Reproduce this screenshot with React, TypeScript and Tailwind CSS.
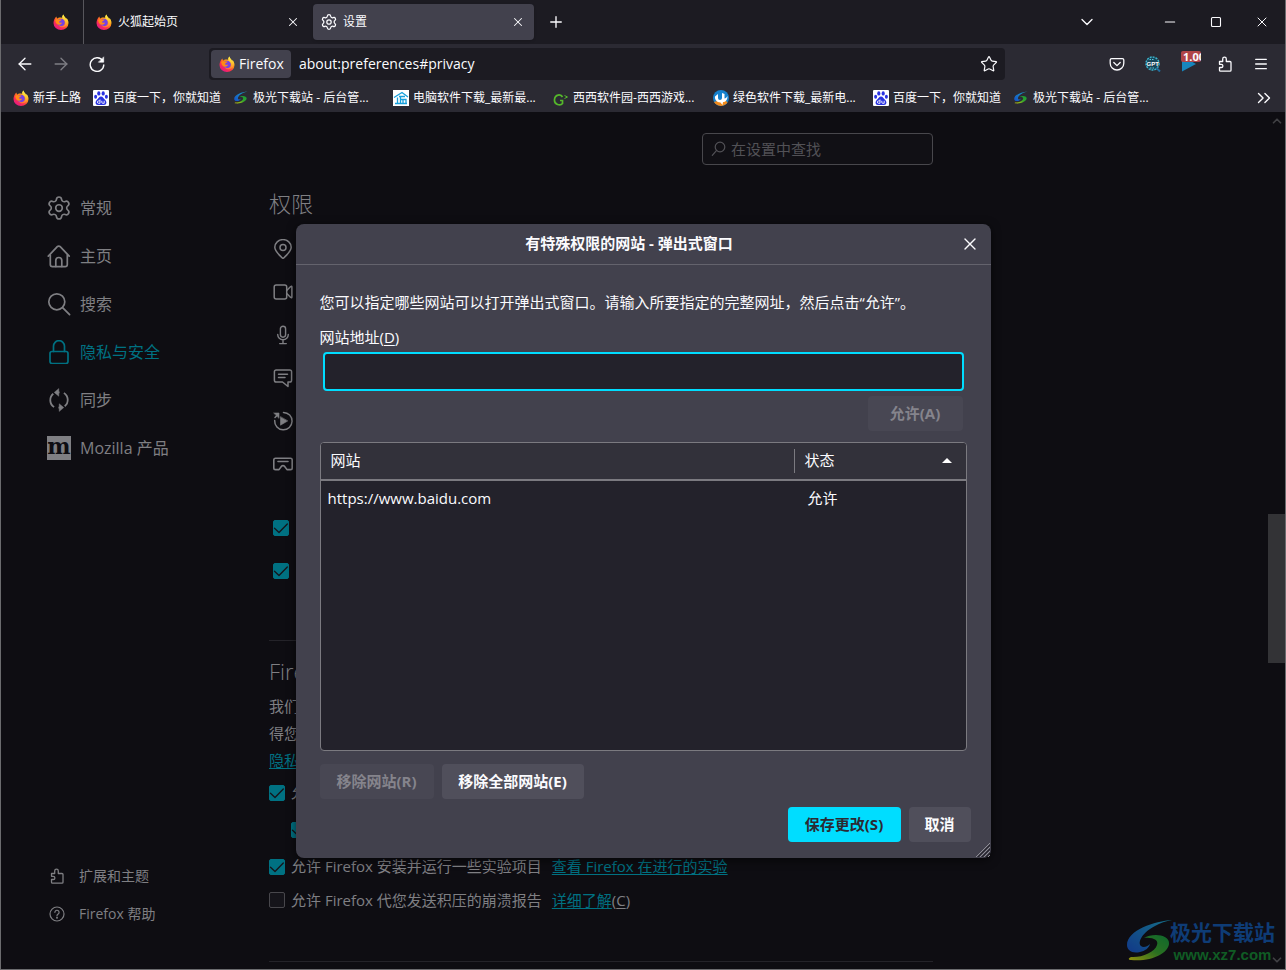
import { useState } from "react";
import {
  ArrowLeft,
  ArrowRight,
  ChevronDown,
  ChevronUp,
  ChevronsRight,
  Menu,
  Minus,
  Plus,
  Settings,
  Square,
  Star,
  X,
} from "lucide-react";
import clsx from "clsx";

type IconProps = { className?: string };

function FirefoxLogo({ className = "size-4 shrink-0" }: IconProps) {
  return (
    <svg viewBox="0 0 32 32" className={className} aria-hidden="true">
      <defs>
        <linearGradient id="fx-body" x1="0.85" y1="0.1" x2="0.2" y2="0.95">
          <stop offset="0" stopColor="#fff44f" />
          <stop offset="0.35" stopColor="#ff980e" />
          <stop offset="0.65" stopColor="#ff3647" />
          <stop offset="1" stopColor="#e31587" />
        </linearGradient>
        <linearGradient id="fx-flame" x1="0.7" y1="0" x2="0.6" y2="1">
          <stop offset="0" stopColor="#fff44f" />
          <stop offset="0.5" stopColor="#ffc62e" />
          <stop offset="1" stopColor="#ff7139" />
        </linearGradient>
      </defs>
      <path
        d="M21 1c-3 3-3 5-2 7-6-2-9 0-10 1-2-1-2-3-2-4-4 3-6 8-6 13a15 14 0 0 0 30 0c0-4-2-8-4-10 0 1 0 2-1 2-1-4-5-5-5-9z"
        fill="url(#fx-body)"
      />
      <circle cx="16" cy="17" r="7.5" fill="#7542e5" />
      <path
        d="M21 1c-3 3-3 6-1 9 5 3 6 8 3 12-3 3-9 3-12 0 4 7 16 6 18-3 1-5 0-8-2-11 0 1 0 2-1 2-1-4-5-5-5-9z"
        fill="url(#fx-flame)"
      />
      <path
        d="M4 12c3-3 6-2 8-1h5c0 2-4 3-5 5 1 2 3 2 6 1-1 5-8 6-11 2-2-2-2-5-3-7z"
        fill="#ff8a16"
      />
    </svg>
  );
}

function BaiduIcon() {
  return (
    <svg viewBox="0 0 16 16" className="size-4 shrink-0" aria-hidden="true">
      <rect width="16" height="16" rx="1" fill="#fff" />
      <g fill="#2932e1">
        <ellipse cx="5.8" cy="3.4" rx="1.6" ry="2.2" />
        <ellipse cx="10.2" cy="3.4" rx="1.6" ry="2.2" />
        <ellipse cx="2.6" cy="6.8" rx="1.5" ry="2" />
        <ellipse cx="13.4" cy="6.8" rx="1.5" ry="2" />
        <path d="M8 6.6c2 0 2.6 2 4 3.2 2.2 2 1.8 5.2-1 5.2H5c-2.8 0-3.2-3.2-1-5.2C5.4 8.6 6 6.6 8 6.6z" />
      </g>
      <path
        d="M7 9.5v3.8H5.6a1.2 1.2 0 0 1 0-2.4H7M8.8 10.8v1.5q0 1 1 1h1.400v-2.5"
        fill="none"
        stroke="#fff"
        strokeWidth="0.9"
      />
    </svg>
  );
}

function AuroraShape() {
  return (
    <>
      <defs>
        <linearGradient id="aurora-blue" x1="1" y1="0" x2="0" y2="1">
          <stop offset="0" stopColor="#1aa5c8" />
          <stop offset="1" stopColor="#1450c8" />
        </linearGradient>
        <linearGradient id="aurora-green" x1="1" y1="0" x2="0" y2="1">
          <stop offset="0" stopColor="#0f9a3c" />
          <stop offset="0.5" stopColor="#3aa52a" />
          <stop offset="1" stopColor="#d9d60a" />
        </linearGradient>
      </defs>
      <path
        d="M45 0C28 1 0 10 0 25c0 5 5 9 13 7 5-1 9-4 10-8-3 3-7 4-9 2-4-4 2-14 14-20C33 3 39 1 45 0z"
        fill="url(#aurora-blue)"
      />
      <path
        d="M17 18c8-5 26-4 25 6C41 33 25 42 4 40c-3 0-3-2 0-3 10 1 24-5 26-12 2-5-4-8-13-7z"
        fill="url(#aurora-green)"
      />
    </>
  );
}

function AuroraIcon() {
  return (
    <svg viewBox="-4 -5 54 54" className="size-4 shrink-0" aria-hidden="true">
      <AuroraShape />
    </svg>
  );
}

function ComputerSoftIcon() {
  return (
    <svg viewBox="0 0 16 16" className="size-4 shrink-0" fill="none" aria-hidden="true">
      <rect width="16" height="16" fill="#fff" />
      <path d="M1 7.500 9 2.500 15 7M2 13.500h12M4.500 7.500v5.500M7.500 6v7.500M7.500 9.500H13v4M6 6.500h6M10 9.500v4" stroke="#18a0dc" strokeWidth="1.300" />
    </svg>
  );
}

function XixiIcon() {
  return (
    <svg viewBox="0 0 16 16" className="size-4 shrink-0" fill="none" stroke="#55b82b" aria-hidden="true">
      <path d="M9.500 7C8 4 2 4 1.500 9.500s6 6.500 8 4V10.500H7" strokeWidth="1.700" />
      <path d="M11.500 5.500 14.500 7l-3 1.500" strokeWidth="1" />
    </svg>
  );
}

function GreenSoftIcon() {
  return (
    <svg viewBox="0 0 16 16" className="size-4 shrink-0" aria-hidden="true">
      <circle cx="8" cy="8" r="8" fill="#1681cd" />
      <path d="M1 12a8 8 0 0 0 13.500 0.500L11 9z" fill="#f28a1b" />
      <path d="M2 6.500 5 4v4q0 2 2 2t2-2V3l2.500 1v4.500q1.500 0 3-2.500c0 4-2 6-4.500 6l-.5 3-2-2.500C3.500 12.500 1.500 9 2 6.500z" fill="#fff" />
    </svg>
  );
}

const line = {
  viewBox: "0 0 16 16",
  fill: "none",
  stroke: "currentColor",
  strokeLinecap: "round",
  strokeLinejoin: "round",
  "aria-hidden": true,
} as const;

function HomeIcon() {
  return (
    <svg {...line} viewBox="0 0 24 24" className="size-6" strokeWidth="1.700">
      <path d="m1.300 12.200 9-9.500a2 2 0 0 1 2.900 0l9 9.500" />
      <path d="M3.300 11v9.500q0 2.200 2.200 2.200h12.600q2.200 0 2.200-2.200V11" />
      <path d="M8.800 22.500v-6a3 3 0 0 1 6 0v6" />
    </svg>
  );
}

function SearchIcon() {
  return (
    <svg {...line} viewBox="0 0 24 24" className="size-6" strokeWidth="1.700">
      <circle cx="9.800" cy="9.800" r="8" />
      <path d="m15.600 15.600 7 7" />
    </svg>
  );
}

function FindIcon() {
  return (
    <svg {...line} className="size-4 shrink-0" strokeWidth="1.200">
      <circle cx="9" cy="6" r="4.800" />
      <path d="m5.600 9.400-4.300 5" />
    </svg>
  );
}

function LockIcon() {
  return (
    <svg {...line} viewBox="0 0 24 24" className="size-6" strokeWidth="1.700">
      <rect x="3" y="11.500" width="18" height="12" rx="2" />
      <path d="M6.500 11.500V6.200a5.500 5.500 0 0 1 11 0v5.300" />
    </svg>
  );
}

function SyncIcon() {
  return (
    <svg {...line} viewBox="0 0 24 24" className="size-6" strokeWidth="1.800" strokeLinecap="butt">
      <path d="M6.300 5.700a8.300 8.300 0 0 0 .8 13.400M17.700 18.300a8.300 8.300 0 0 0-.8-13.400" />
      <path d="M9 4.300h3.500M15 19.700h-3.500" />
      <path d="M11.800.5v7.800L7.200 4.400zM12.200 15.700v7.800l4.600-3.900z" fill="currentColor" strokeWidth="0.400" />
    </svg>
  );
}

function MozillaIcon() {
  return (
    <svg viewBox="0 0 24 24" className="size-6" aria-hidden="true">
      <rect width="24" height="24" fill="#7f7f83" />
      <text
        x="12"
        y="18"
        textAnchor="middle"
        fontSize="22"
        fontWeight="700"
        fontFamily="DejaVu Serif, serif"
        fill="#0e0d12"
      >
        m
      </text>
    </svg>
  );
}

function PuzzleIcon() {
  return (
    <svg {...line} className="size-4" strokeWidth="1.300">
      <path d="M2.500 5.500h3.200V3a1.800 1.800 0 0 1 3.600 0v2.500h3.700q1 0 1 1v7.700q0 1-1 1H3.500q-1 0-1-1v-2.700h1.800a1.600 1.600 0 0 0 0-3.200H2.500z" />
    </svg>
  );
}

function HelpIcon() {
  return (
    <svg {...line} className="size-4" strokeWidth="1.200">
      <circle cx="8" cy="8" r="7" />
      <path d="M5.900 6.300a2.100 2.100 0 1 1 3.300 1.800q-1.200.8-1.200 1.700" />
      <circle cx="8" cy="11.800" r="0.400" fill="currentColor" />
    </svg>
  );
}

function LocationIcon() {
  return (
    <svg {...line} viewBox="0 0 20 20" className="size-5" strokeWidth="1.500">
      <path d="M10 19.300c-.6 0-1-.4-1.500-1C5 14.500 1.800 12 1.800 8.300a8.200 7.700 0 0 1 16.400 0c0 3.700-3.200 6.200-6.700 10-.5.6-.9 1-1.500 1z" />
      <circle cx="10" cy="8.500" r="3" />
    </svg>
  );
}

function CameraIcon() {
  return (
    <svg {...line} viewBox="0 0 20 20" className="size-5" strokeWidth="1.500">
      <rect x="1.200" y="3" width="12.500" height="14" rx="2" />
      <path d="m13.700 8.500 4-4q1.200-.8 1.200.5v10q0 1.300-1.200.5l-4-4" />
    </svg>
  );
}

function MicIcon() {
  return (
    <svg {...line} viewBox="0 0 20 20" className="size-5" strokeWidth="1.400">
      <rect x="7.400" y="1.200" width="5.200" height="11" rx="2.600" />
      <path d="M4.700 9.500a5.300 5.300 0 0 0 10.600 0M10 14.800v3.700M6.700 18.600h6.600" />
    </svg>
  );
}

function NotificationIcon() {
  return (
    <svg {...line} viewBox="0 0 20 20" className="size-5" strokeWidth="1.500">
      <path d="M3.200 2h13.600q1.800 0 1.800 1.800v8.400q0 1.800-1.800 1.800H15v4.500L9.500 14H3.200q-1.800 0-1.800-1.800V3.800Q1.400 2 3.200 2zM5.500 6.200h9M5.500 9.500h6.500" />
    </svg>
  );
}

function AutoplayIcon() {
  return (
    <svg {...line} viewBox="0 0 20 20" className="size-5" strokeWidth="1.500">
      <path d="M10.500 1.400a8.700 8.700 0 1 1-8.800 8.200M5 3.500 2 6.500" />
      <path d="M1 2h5v5zM7.500 6v8.200l7-4.100z" fill="currentColor" strokeWidth="0.600" />
    </svg>
  );
}

function VrIcon() {
  return (
    <svg {...line} viewBox="0 0 20 20" className="size-5" strokeWidth="1.600">
      <path d="M2.500 4.200h15q1.700 0 1.700 1.700v8q0 1.700-1.700 1.700H14L11.500 12.200q-1.500-1.200-3 0L6 15.600H2.500q-1.700 0-1.700-1.700v-8q0-1.700 1.700-1.700zM5 7.500h10" />
    </svg>
  );
}

function PocketIcon() {
  return (
    <svg {...line} className="size-4" strokeWidth="1.300">
      <path d="M2.600 2.700h10.800q1.400 0 1.400 1.400v3.100a6.800 6.800 0 0 1-13.600 0V4.100q0-1.400 1.400-1.400zM4.800 6.500 8 9.600l3.200-3.100" />
    </svg>
  );
}

function GptIcon() {
  return (
    <svg viewBox="0 0 16 16" className="size-4" aria-hidden="true">
      <circle cx="7.500" cy="7.500" r="6.500" fill="#17465a" stroke="#3bb3cc" strokeWidth="1.500" strokeDasharray="2 1" />
      <path d="m11.500 12 3.500 3.500" stroke="#226d9c" strokeWidth="2" />
      <path d="M4.500 3.500h5M5 12h5" stroke="#5fc6da" strokeDasharray="1.500 1" />
      <text x="7.700" y="10" textAnchor="middle" fontSize="6" fontWeight="700" fontFamily="Liberation Sans" fill="#fff">
        GPT
      </text>
    </svg>
  );
}

function ReloadIcon() {
  return (
    <svg {...line} className="size-4" strokeWidth="1.400">
      <path d="M13.800 5A6.800 6.800 0 1 0 14.800 9" />
      <path d="M14.700 1.200v5h-5z" fill="currentColor" strokeWidth="0.600" />
    </svg>
  );
}

const bookmarks = [
  { label: "新手上路", icon: FirefoxLogo },
  { label: "百度一下，你就知道", icon: BaiduIcon },
  { label: "极光下载站 - 后台管...", icon: AuroraIcon, wide: true },
  { label: "电脑软件下载_最新最...", icon: ComputerSoftIcon, wide: true },
  { label: "西西软件园-西西游戏...", icon: XixiIcon, wide: true },
  { label: "绿色软件下载_最新电...", icon: GreenSoftIcon, wide: true },
  { label: "百度一下，你就知道", icon: BaiduIcon },
  { label: "极光下载站 - 后台管...", icon: AuroraIcon, wide: true },
];

const categories = [
  { id: "general", label: "常规", icon: () => <Settings className="size-6 scale-110" strokeWidth={1.5} /> },
  { id: "home", label: "主页", icon: HomeIcon },
  { id: "search", label: "搜索", icon: SearchIcon },
  { id: "privacy", label: "隐私与安全", icon: LockIcon },
  { id: "sync", label: "同步", icon: SyncIcon },
  { id: "mozilla", label: "Mozilla 产品", icon: MozillaIcon },
];

const permissions = [LocationIcon, CameraIcon, MicIcon, NotificationIcon, AutoplayIcon, VrIcon];

function TabStrip() {
  return (
    <div className="flex h-11 items-center bg-[#1c1b22] text-xs">
      <div className="flex h-full w-[83px] shrink-0 items-center justify-end border-r border-[#57565c] pr-3.5">
        <FirefoxLogo />
      </div>
      <div className="ml-1 flex h-9 w-[221px] items-center gap-1.5 pr-1 pl-2">
        <FirefoxLogo />
        <span className="flex-1">火狐起始页</span>
        <button aria-label="关闭标签页" className="flex size-6 items-center justify-center">
          <X className="size-3.5" strokeWidth={1.8} />
        </button>
      </div>
      <div className="ml-1 flex h-9 w-[221px] items-center gap-1.5 rounded bg-[#42414d] pr-1 pl-2 shadow">
        <Settings className="size-4 scale-110" strokeWidth={1.7} />
        <span className="flex-1">设置</span>
        <button aria-label="关闭标签页" className="flex size-6 items-center justify-center">
          <X className="size-3.5" strokeWidth={1.8} />
        </button>
      </div>
      <button aria-label="新建标签页" className="ml-1.5 flex size-8 items-center justify-center">
        <Plus className="size-[18px]" strokeWidth={1.8} />
      </button>
      <div className="flex-1" />
      <button aria-label="列出所有标签页" className="mr-11 flex size-8 items-center justify-center">
        <ChevronDown className="size-5" strokeWidth={1.6} />
      </button>
      <button aria-label="最小化" className="flex h-full w-[46px] items-center justify-center">
        <Minus className="size-4" strokeWidth={1.6} />
      </button>
      <button aria-label="最大化" className="flex h-full w-[46px] items-center justify-center">
        <Square className="size-3" strokeWidth={2.2} />
      </button>
      <button aria-label="关闭" className="flex h-full w-[46px] items-center justify-center">
        <X className="size-4" strokeWidth={1.5} />
      </button>
    </div>
  );
}

function NavBar() {
  const btn = "flex h-8 w-9 items-center justify-center";
  return (
    <div className="flex h-10 items-center bg-[#2b2a33] px-1.5">
      <button aria-label="后退" className={btn}>
        <ArrowLeft className="size-5" strokeWidth={1.6} />
      </button>
      <button aria-label="前进" disabled className={clsx(btn, "opacity-40")}>
        <ArrowRight className="size-5" strokeWidth={1.6} />
      </button>
      <button aria-label="刷新" className={btn}>
        <ReloadIcon />
      </button>
      <div className="mx-[94px] flex h-8 flex-1 items-center rounded bg-[#1c1b22] pl-0.5 text-sm">
        <span className="flex h-7 w-20 shrink-0 items-center gap-1 rounded-sm bg-[#42414d] pl-2">
          <FirefoxLogo />
          <span>Firefox</span>
        </span>
        <input
          aria-label="地址"
          defaultValue="about:preferences#privacy"
          className="ml-2 min-w-0 flex-1 bg-transparent outline-none"
        />
        <button aria-label="添加书签" className="flex size-8 items-center justify-center">
          <Star className="size-[18px]" strokeWidth={1.6} />
        </button>
      </div>
      <button aria-label="Pocket" className={btn}>
        <PocketIcon />
      </button>
      <button aria-label="GPT" className={btn}>
        <GptIcon />
      </button>
      <button aria-label="播放速度" className={clsx(btn, "relative")}>
        <svg viewBox="0 0 16 16" className="size-4" aria-hidden="true">
          <path d="M1 0v15.500L15 8z" fill="#1786bd" />
        </svg>
        <span className="absolute top-[3px] left-[10px] h-[11px] w-5 overflow-hidden rounded-[2px] bg-[#b04548] pl-0.5 text-left text-[11px] leading-[11px] font-bold">
          1.00
        </span>
      </button>
      <button aria-label="扩展" className={btn}>
        <PuzzleIcon />
      </button>
      <button aria-label="菜单" className={btn}>
        <Menu className="size-4" strokeWidth={2} />
      </button>
    </div>
  );
}

function BookmarksBar() {
  return (
    <div className="flex h-7 items-center gap-3 bg-[#2b2a33] pr-2.5 pl-3 text-xs">
      {bookmarks.map((b, i) => (
        <a
          key={i}
          href="#"
          className={clsx(
            "flex shrink-0 items-center gap-1 overflow-hidden whitespace-nowrap",
            b.wide && "w-[148px]"
          )}
        >
          <b.icon />
          {b.label}
        </a>
      ))}
      <button aria-label="更多书签" className="ml-auto">
        <ChevronsRight className="size-[22px]" strokeWidth={1.5} />
      </button>
    </div>
  );
}

function DimCheckbox({ label, id, checked = false }: { label: string; id: string; checked?: boolean }) {
  const [on, setOn] = useState(checked);
  return (
    <span className="relative flex size-4 shrink-0">
      <input
        id={id}
        type="checkbox"
        aria-label={label}
        checked={on}
        onChange={(e) => setOn(e.target.checked)}
        className="size-4 appearance-none rounded-[2px] border border-[#48474c] bg-[#15141a] checked:border-[#007182] checked:bg-[#007182]"
      />
      {on && (
        <svg {...line} className="pointer-events-none absolute inset-0 text-[#15141a]" strokeWidth="1.300">
          <path d="M1.500 8.300 6 12.500 14.300 4" />
        </svg>
      )}
    </span>
  );
}

function Sidebar() {
  return (
    <nav className="flex w-[268px] shrink-0 flex-col justify-between pt-[72px] pb-9 pl-[46px]">
      <ul>
        {categories.map((c) => (
          <li key={c.id}>
            <a
              href={`#${c.id}`}
              className={clsx("flex h-12 items-center gap-[9px]", c.id === "privacy" && "text-[#007182]")}
            >
              <c.icon />
              {c.label}
            </a>
          </li>
        ))}
      </ul>
      <ul className="pl-0.5 text-sm">
        <li>
          <a href="#addons" className="flex h-[38px] items-center gap-3.5">
            <PuzzleIcon />
            扩展和主题
          </a>
        </li>
        <li>
          <a href="#help" className="flex h-[38px] items-center gap-3.5">
            <HelpIcon />
            Firefox 帮助
          </a>
        </li>
      </ul>
    </nav>
  );
}

function PrivacyPane() {
  const link = "text-[#007182] underline underline-offset-2";
  return (
    <div className="flex w-[664px] flex-col pt-[21px] text-[15px]">
      <div className="flex h-8 w-[231px] items-center gap-1 self-end rounded border border-[#48474c] bg-[#111015] px-2 text-[#525156]">
        <FindIcon />
        <input
          aria-label="在设置中查找"
          placeholder="在设置中查找"
          className="min-w-0 flex-1 bg-transparent outline-none placeholder:text-[#525156]"
        />
      </div>

      <h2 className="mt-[22px] text-[22px] leading-8 font-light">权限</h2>
      <ul className="mt-2 pl-1">
        {permissions.map((Icon, i) => (
          <li key={i} className="flex h-[43px] items-center">
            <Icon />
          </li>
        ))}
      </ul>
      <div className="mt-[21px] flex h-[43px] items-center pl-1">
        <DimCheckbox id="block-popups" label="阻止弹出式窗口" checked />
      </div>
      <div className="flex h-[43px] items-center pl-1">
        <DimCheckbox id="warn-addons" label="安装附加组件时警告" checked />
      </div>

      <hr className="mt-12 border-[#242329]" />
      <h2 className="mt-3.5 text-[22px] leading-8 font-light">Firefox</h2>
      <p className="mt-1.5 leading-[27px]">
        我们
        <br />
        得您
        <br />
        <a href="#notice" className={link}>
          隐私
        </a>
      </p>
      <div className="flex h-[37px] items-center gap-1.5">
        <DimCheckbox id="telemetry" label="允许发送技术数据" checked />
        <span>允</span>
      </div>
      <div className="flex h-[37px] items-center pl-[22px]">
        <DimCheckbox id="recommend" label="允许个性化推荐" checked />
      </div>
      <div className="flex h-[37px] items-center gap-1.5">
        <DimCheckbox id="studies" label="允许安装并运行实验" checked />
        <label htmlFor="studies">允许 Firefox 安装并运行一些实验项目</label>
        <a href="#studies" className={clsx(link, "ml-1")}>
          查看 Firefox 在进行的实验
        </a>
      </div>
      <div className="flex h-[30px] items-center gap-1.5">
        <DimCheckbox id="crash" label="允许发送崩溃报告" />
        <label htmlFor="crash">允许 Firefox 代您发送积压的崩溃报告</label>
        <span className="ml-1">
          <a href="#crash" className={link}>
            详细了解
          </a>
          (<u className="underline-offset-2">C</u>)
        </span>
      </div>
      <hr className="mt-[46px] border-[#242329]" />
    </div>
  );
}

function PageScrollbar() {
  return (
    <div className="flex w-[17px] shrink-0 flex-col items-center text-[#404044]">
      <ChevronUp className="my-0.5 size-3.5" strokeWidth={3} />
      <div className="grow-[384]" />
      <div className="h-[149px] w-full bg-[#333336]" />
      <div className="grow-[288]" />
      <ChevronDown className="my-0.5 size-3.5" strokeWidth={3} />
    </div>
  );
}

function PermissionDialog() {
  const [address, setAddress] = useState("");
  const btn = "h-[35px] rounded bg-[#504f5b] font-bold";
  const dimmed = "bg-[#484753] text-[#85848c]";

  return (
    <div
      role="dialog"
      aria-labelledby="dialog-title"
      className="relative w-[695px] max-w-full rounded-lg bg-[#42414d] text-[15px] text-[#fbfbfe] shadow-[0_2px_10px_rgba(0,0,0,0.6)]"
    >
      <header className="flex h-[41px] items-center border-b border-[#64636d] pr-2 pl-1.5">
        <h1 id="dialog-title" className="flex-1 text-center font-bold">
          有特殊权限的网站 - 弹出式窗口
        </h1>
        <button aria-label="关闭" className="flex h-8 w-[26px] items-center justify-center">
          <X className="size-5" strokeWidth={1.6} />
        </button>
      </header>

      <div className="flex flex-col px-6 pt-[25px]">
        <p className="leading-6">您可以指定哪些网站可以打开弹出式窗口。请输入所要指定的完整网址，然后点击“允许”。</p>
        <label htmlFor="address" className="mt-[11px] leading-6">
          网站地址(<u className="underline-offset-2">D</u>)
        </label>
        <input
          id="address"
          value={address}
          onChange={(e) => setAddress(e.target.value)}
          className="mx-[3px] mt-[3px] h-[39px] rounded border-2 border-[#00ddff] bg-[#23222b] px-2 outline-none"
        />
        <button disabled={!address} className={clsx(btn, "mt-[5px] mr-1 w-[95px] self-end", !address && dimmed)}>
          允许(A)
        </button>

        <div className="mt-[11px] min-h-[309px] overflow-hidden rounded border border-[#7b7a80] bg-[#23222b]">
          <table className="w-full table-fixed border-collapse text-left">
            <thead>
              <tr className="h-[37px] border-b-2 border-[#7b7a80] bg-[#32313a]">
                <th className="pl-2.5 font-normal">网站</th>
                <th className="w-[172px] font-normal">
                  <span className="flex h-6 items-center justify-between border-l border-[#7b7a80] pr-3.5 pl-2.5">
                    状态
                    <svg viewBox="0 0 10 5" className="h-[5px] w-2.5" aria-hidden="true">
                      <path d="M0 5 5 0l5 5z" fill="#fff" />
                    </svg>
                  </span>
                </th>
              </tr>
            </thead>
            <tbody>
              <tr className="h-9">
                <td className="pl-[7px]">https://www.baidu.com</td>
                <td className="pl-3.5">允许</td>
              </tr>
            </tbody>
          </table>
        </div>

        <div className="mt-[13px] flex gap-2">
          <button disabled className={clsx(btn, dimmed, "w-[114px]")}>
            移除网站(R)
          </button>
          <button className={clsx(btn, "w-[142px]")}>移除全部网站(E)</button>
        </div>
      </div>

      <footer className="flex justify-end gap-2 pt-2 pr-5 pb-4">
        <button className="h-[35px] w-[113px] rounded bg-[#00ddff] font-bold text-[#2b2a33]">保存更改(S)</button>
        <button className={clsx(btn, "w-[62px]")}>取消</button>
      </footer>

      <svg viewBox="0 0 14 14" className="absolute right-px bottom-px size-3.5" aria-hidden="true">
        <path d="M0 14 14 0M4 14 14 4M8 14l6-6M12 14l2-2" stroke="#8f8e96" />
        <path d="M2 14 14 2M6 14l8-8M10 14l4-4" stroke="#25242b" />
      </svg>
    </div>
  );
}

export default function App() {
  return (
    <div className="flex min-h-screen flex-col border-x border-b border-[#6b6b6e] bg-[#0e0d12] font-['Open_Sans','Noto_Sans_CJK_SC',sans-serif] text-[#fbfbfe]">
      <TabStrip />
      <NavBar />
      <BookmarksBar />
      <main className="relative flex flex-1 text-[#7f7f83]">
        <Sidebar />
        <PrivacyPane />
        <div className="flex-1" />
        <PageScrollbar />

        <div className="absolute inset-0 flex items-center justify-center">
          <PermissionDialog />
        </div>

        {/* site watermark */}
        <div className="absolute right-2.5 bottom-1.5 flex items-center opacity-65">
          <svg viewBox="0 0 45 42" className="h-[42px] w-[45px]" aria-hidden="true">
            <AuroraShape />
          </svg>
          <div className="-ml-0.5 text-center font-['Liberation_Sans','Noto_Sans_CJK_SC',sans-serif] font-bold">
            <div className="text-[21px] leading-7 text-[#0e56ac]">极光下载站</div>
            <div className="text-[15px] leading-4 text-[#12862f]">www.xz7.com</div>
          </div>
        </div>
      </main>
    </div>
  );
}
